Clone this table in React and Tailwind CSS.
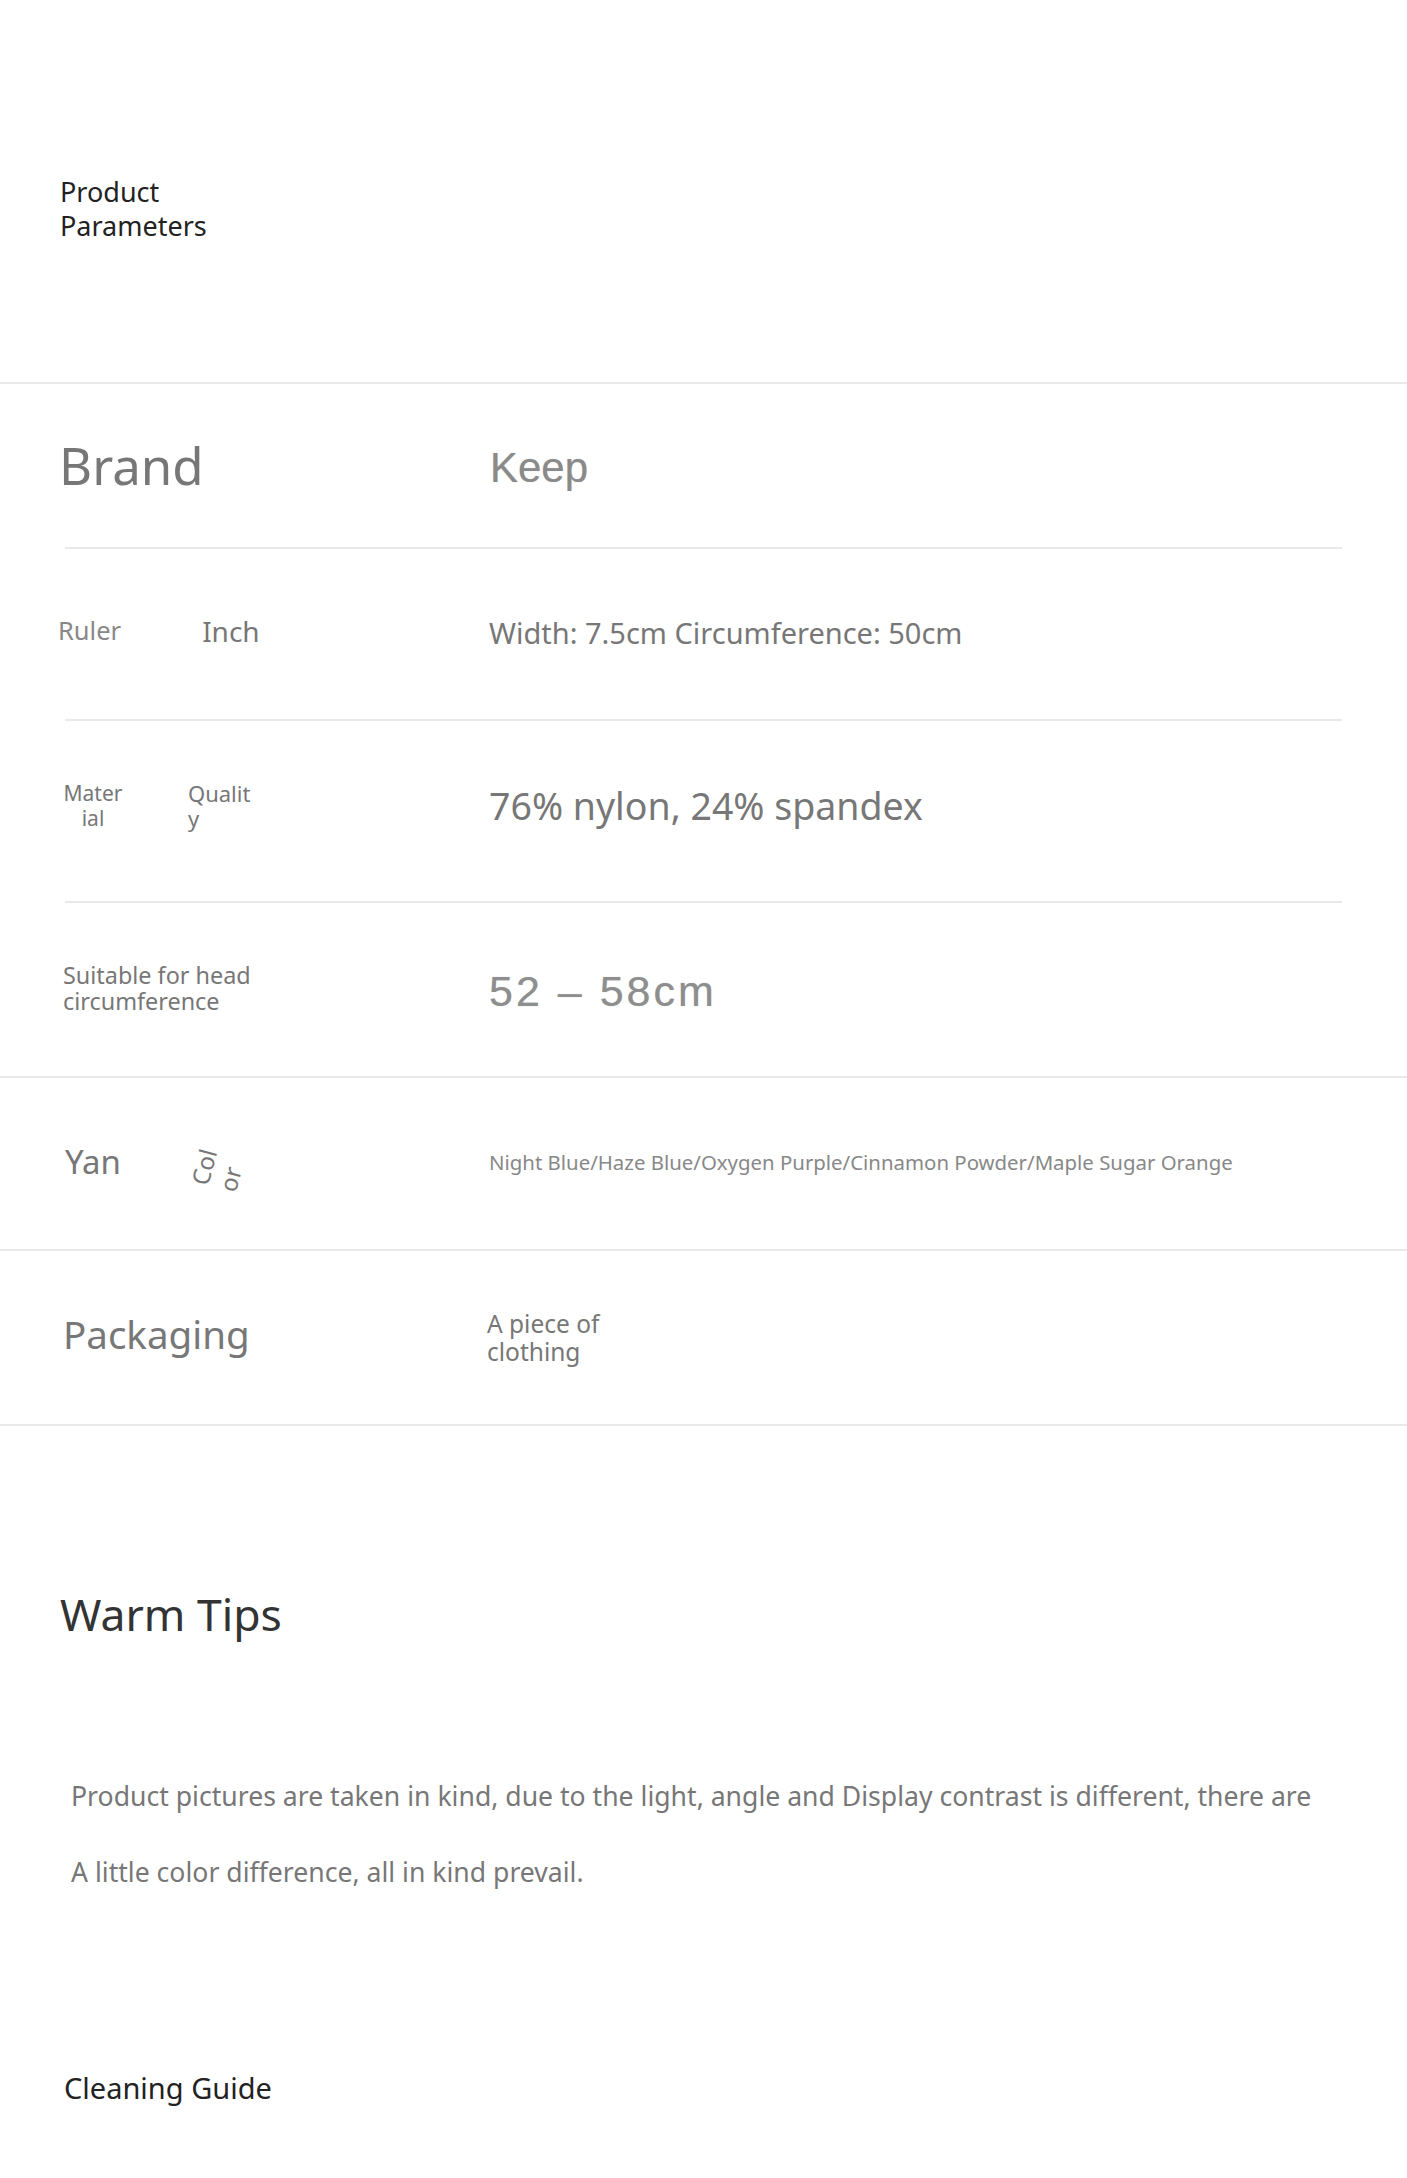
import React from "react";

const Line = () => <div className="h-[2px] w-full bg-[#e9e9e9]" />;
const InnerLine = () => <div className="ml-[65px] h-[2px] w-[1277px] bg-[#e9e9e9]" />;

const Row = ({ h, label, labelClass = "", children }) => (
  <div className={`flex items-center ${h}`}>
    <div className={`flex w-[489px] shrink-0 items-center ${labelClass}`}>{label}</div>
    <div className="flex-1">{children}</div>
  </div>
);

export default function App() {
  return (
    <div className="w-[1407px] bg-white font-['Noto_Sans',sans-serif] text-[#777]">
      <div className="h-[382px] pl-[60px] pt-[175px]">
        <div className="text-[27px] leading-[34px] text-[#222]">
          <div>Product</div>
          <div>Parameters</div>
        </div>
      </div>

      <Line />
      <Row h="h-[163px]" label={<span className="ml-[59px] text-[51px] leading-none">Brand</span>}>
        <span className="ml-[1px] block pt-[5px] font-['Liberation_Sans',Arial,sans-serif] text-[42px] leading-none text-[#8a8a8a] [text-shadow:0_0_1px_#bbb]">
          Keep
        </span>
      </Row>
      <InnerLine />
      <Row
        h="h-[170px]"
        labelClass="pb-[6px]"
        label={
          <>
            <span className="ml-[58px] text-[25.5px] leading-none text-[#888]">Ruler</span>
            <span className="ml-[81px] text-[28px] leading-none">Inch</span>
          </>
        }
      >
        <span className="text-[29px] leading-none">Width: 7.5cm Circumference: 50cm</span>
      </Row>
      <InnerLine />
      <Row
        h="h-[180px] pb-[10px]"
        label={
          <>
            <div className="ml-[63px] w-[60px] text-center text-[21px] leading-[25px]">
              <div>Mater</div>
              <div>ial</div>
            </div>
            <div className="ml-[65px] text-[22px] leading-[25px]">
              <div>Qualit</div>
              <div>y</div>
            </div>
          </>
        }
      >
        <span className="text-[37.5px] leading-none">76% nylon, 24% spandex</span>
      </Row>
      <InnerLine />
      <Row
        h="h-[173px]"
        labelClass="pb-[4px]"
        label={
          <div className="ml-[63px] text-[23.4px] leading-[26px]">
            <div>Suitable for head</div>
            <div>circumference</div>
          </div>
        }
      >
        <span className="block pt-[3px] font-['Liberation_Sans',Arial,sans-serif] text-[43px] leading-none tracking-[3px] text-[#8e8e8e] [text-shadow:0_0_1px_#bbb]">
          52 – 58cm
        </span>
      </Row>
      <Line />
      <Row
        h="h-[171px]"
        label={
          <>
            <span className="ml-[65px] -translate-y-[2px] text-[33px] leading-none">Yan</span>
            <span className="ml-[65px] inline-block translate-y-[3px] -rotate-[75deg] text-[24px] leading-none">Col</span>
            <span className="ml-[-4px] inline-block translate-y-[15px] -rotate-[75deg] text-[24px] leading-none">or</span>
          </>
        }
      >
        <span className="text-[20.4px] leading-none text-[#888]">
          Night Blue/Haze Blue/Oxygen Purple/Cinnamon Powder/Maple Sugar Orange
        </span>
      </Row>
      <Line />
      <Row h="h-[173px]" label={<span className="ml-[63px] -translate-y-[3px] text-[38.5px] leading-none">Packaging</span>}>
        <div className="-ml-[2px] text-[24.5px] leading-[28px]">
          <div>A piece of</div>
          <div>clothing</div>
        </div>
      </Row>
      <Line />

      <div className="pl-[60px] pt-[166px] text-[44.5px] leading-none text-[#333]">Warm Tips</div>

      <div className="pl-[71px] pt-[121px] text-[26.6px] leading-[76px]">
        <div>
          Product pictures are taken in kind, due to the light, angle and Display contrast is different, there are
        </div>
        <div>A little color difference, all in kind prevail.</div>
      </div>

      <div className="pb-[75px] pl-[64px] pt-[163px] text-[29px] leading-none text-[#222]">Cleaning Guide</div>
    </div>
  );
}
